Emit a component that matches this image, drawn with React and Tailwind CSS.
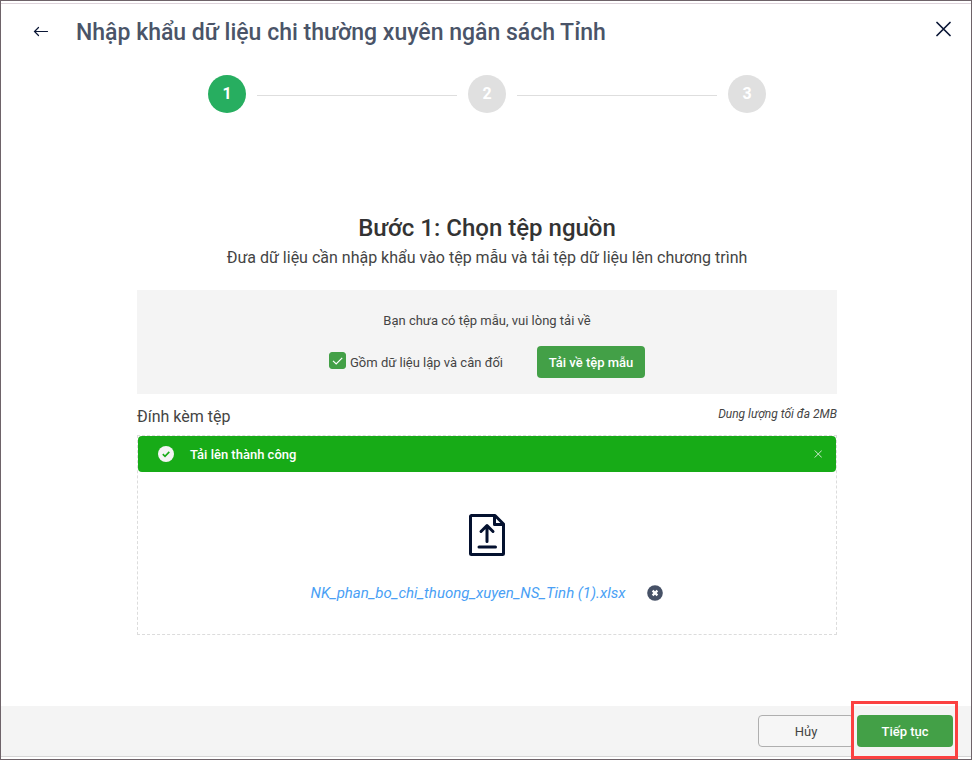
import React, { useState } from "react";
import { clsx } from "clsx";

const STEPS = [1, 2, 3];

const App = () => {
  const [step, setStep] = useState(1);
  const [includePlan, setIncludePlan] = useState(true);
  const [showSuccess, setShowSuccess] = useState(true);
  const [fileName, setFileName] = useState("NK_phan_bo_chi_thuong_xuyen_NS_Tinh (1).xlsx");

  return (
    <div className="min-h-screen flex flex-col border border-[#6e6369] bg-white py-0.5 font-['Roboto','Liberation_Sans',sans-serif] text-[13px] leading-5 text-[#444444]">
      {/* Header */}
      <header className="flex items-start border-t border-[#ddd3da] pl-8 pr-5 pt-3">
        <button type="button" aria-label="Quay lại" className="mt-[7px] flex size-4 items-center justify-center text-[#0b1736]">
          <BackIcon />
        </button>
        <h1 className="ml-[27px] flex-1 pt-px text-[23px] leading-8 font-medium text-[#4a5468]">
          Nhập khẩu dữ liệu chi thường xuyên ngân sách Tỉnh
        </h1>
        <button type="button" aria-label="Đóng" className="mt-[5px] text-[#0b1736]">
          <CloseIcon className="size-4" strokeWidth="1.7" />
        </button>
      </header>

      <main className="flex flex-1 flex-col items-center pl-0.5 pt-[26px]">
        <Stepper current={step} />

        <h2 className="mt-[99px] text-2xl leading-8 font-medium text-[#333333]">Bước 1: Chọn tệp nguồn</h2>
        <p className="mt-0.5 text-base leading-6">
          Đưa dữ liệu cần nhập khẩu vào tệp mẫu và tải tệp dữ liệu lên chương trình
        </p>

        {/* Template download */}
        <section className="mt-5 flex w-full max-w-[700px] flex-col items-center bg-[#f4f4f4] pt-[21px] pb-4">
          <p>Bạn chưa có tệp mẫu, vui lòng tải về</p>
          <div className="mt-[15px] flex items-center">
            <label htmlFor="include-plan" className="flex items-start gap-1">
              <span className="relative flex size-[17px]">
                <input
                  id="include-plan"
                  type="checkbox"
                  checked={includePlan}
                  onChange={(e) => setIncludePlan(e.target.checked)}
                  className="size-full appearance-none rounded-[3px] border border-[#43a047] bg-white checked:bg-[#43a047]"
                />
                {includePlan && (
                  <svg viewBox="0 0 17 17" className="pointer-events-none absolute inset-0 size-full" fill="none" stroke="white" strokeWidth="1.2">
                    <path d="M4 8.8 7.2 12 13.2 5.8" />
                  </svg>
                )}
              </span>
              <span className="pt-px">Gồm dữ liệu lập và cân đối</span>
            </label>
            <button type="button" className="ml-[34px] h-8 w-[108px] rounded bg-[#43a047] pt-0.5 font-medium text-white">
              Tải về tệp mẫu
            </button>
          </div>
        </section>

        {/* Attachment */}
        <section className="w-full max-w-[700px] pt-2">
          <div className="flex items-start justify-between">
            <h3 className="pt-[3px] pb-1.5 text-base leading-6">Đính kèm tệp</h3>
            <span className="text-xs leading-6 italic">Dung lượng tối đa 2MB</span>
          </div>
          <div className="flex min-h-[200px] flex-col border border-dashed border-[#dcdcdc]">
            {showSuccess && (
              <div role="status" className="flex h-9 items-center rounded bg-[#17ab17] pl-5 pr-3.5 font-medium text-white">
                <SuccessIcon />
                <span className="ml-4 flex-1 pt-0.5">Tải lên thành công</span>
                <button type="button" aria-label="Ẩn thông báo" onClick={() => setShowSuccess(false)} className="text-[#cfe8cf]">
                  <CloseIcon className="size-2" strokeWidth="2" />
                </button>
              </div>
            )}
            <div className="flex flex-1 flex-col items-center pt-[42px]">
              <UploadIcon />
              {fileName && (
                <div className="mt-[25px] flex items-center gap-[22px]">
                  <a href="#file" className="text-[15px] leading-6 italic text-[#4a9ff5]">{fileName}</a>
                  <button type="button" aria-label="Xóa tệp" onClick={() => setFileName("")}>
                    <RemoveIcon />
                  </button>
                </div>
              )}
            </div>
          </div>
        </section>
      </main>

      {/* Footer */}
      <footer className="flex justify-end gap-[3px] border-b border-[#d5d5d5] bg-[#f4f4f4] pt-[9px] pr-[18px] pb-[9px]">
        <button type="button" className="h-8 w-24 rounded border border-[#afafaf] bg-[#f6f6f6] pt-0.5">
          Hủy
        </button>
        <div className="relative">
          <button
            type="button"
            onClick={() => setStep(Math.min(step + 1, STEPS.length))}
            className="h-8 w-24 rounded bg-[#43a047] pt-0.5 font-medium text-white"
          >
            Tiếp tục
          </button>
          <span className="pointer-events-none absolute -top-3.5 -right-[5px] -bottom-3 -left-1.5 border-3 border-[#fb4141]" />
        </div>
      </footer>
    </div>
  );
};

// --- Helper Components ---
const Stepper = ({ current }) => (
  <ol className="flex w-full max-w-[558px] items-center gap-[11px] text-base font-bold text-white">
    {STEPS.map((n) => (
      <React.Fragment key={n}>
        {n > 1 && <li aria-hidden="true" className="mt-0.5 h-px flex-1 bg-[#dedede]" />}
        <li
          className={clsx(
            "flex size-[38px] items-center justify-center rounded-full",
            n === current ? "bg-[#27ae60]" : "bg-[#e0e0e0]"
          )}
        >
          {n}
        </li>
      </React.Fragment>
    ))}
  </ol>
);

const BackIcon = () => (
  <svg viewBox="0 0 16 16" className="size-4" fill="none" stroke="currentColor" strokeWidth="1.2" strokeLinecap="round">
    <path d="M1.5 8.5H14.5M5.500 4.5 1.500 8.5 5.500 12.5" />
  </svg>
);

const CloseIcon = ({ className, strokeWidth }) => (
  <svg viewBox="0 0 16 16" className={className} fill="none" stroke="currentColor" strokeWidth={strokeWidth} strokeLinecap="round">
    <path d="M2 1.5 15 14.5M15 1.5 2 14.5" />
  </svg>
);

const SuccessIcon = () => (
  <svg viewBox="0 0 16 16" className="size-4" fill="none">
    <circle cx="8" cy="8" r="8" fill="#f4f4f4" />
    <path d="M4.8 8.2 7 10.3 11.3 5.9" stroke="#17ab17" strokeWidth="1.6" />
  </svg>
);

const UploadIcon = () => (
  <svg viewBox="0 0 36 42" className="h-[42px] w-9" fill="none" stroke="#04112f" strokeWidth="3" strokeLinecap="round" strokeLinejoin="round">
    <path d="M1.5 2.5a1 1 0 0 1 1-1H26L34.5 10V39.5a1 1 0 0 1-1 1H2.5a1 1 0 0 1-1-1Z" />
    <path d="M25.5 2V10.5H34" />
    <path d="M18 27.5V11.5M12 17.5 18 11.5 24 17.5M10 33H26.5" />
  </svg>
);

const RemoveIcon = () => (
  <svg viewBox="0 0 16 16" className="size-4" fill="none">
    <circle cx="8" cy="8" r="7.8" fill="#465166" />
    <path d="M5.6 5.6 10.4 10.4M10.4 5.6 5.6 10.4" stroke="white" strokeWidth="2.2" />
  </svg>
);

export default App;
